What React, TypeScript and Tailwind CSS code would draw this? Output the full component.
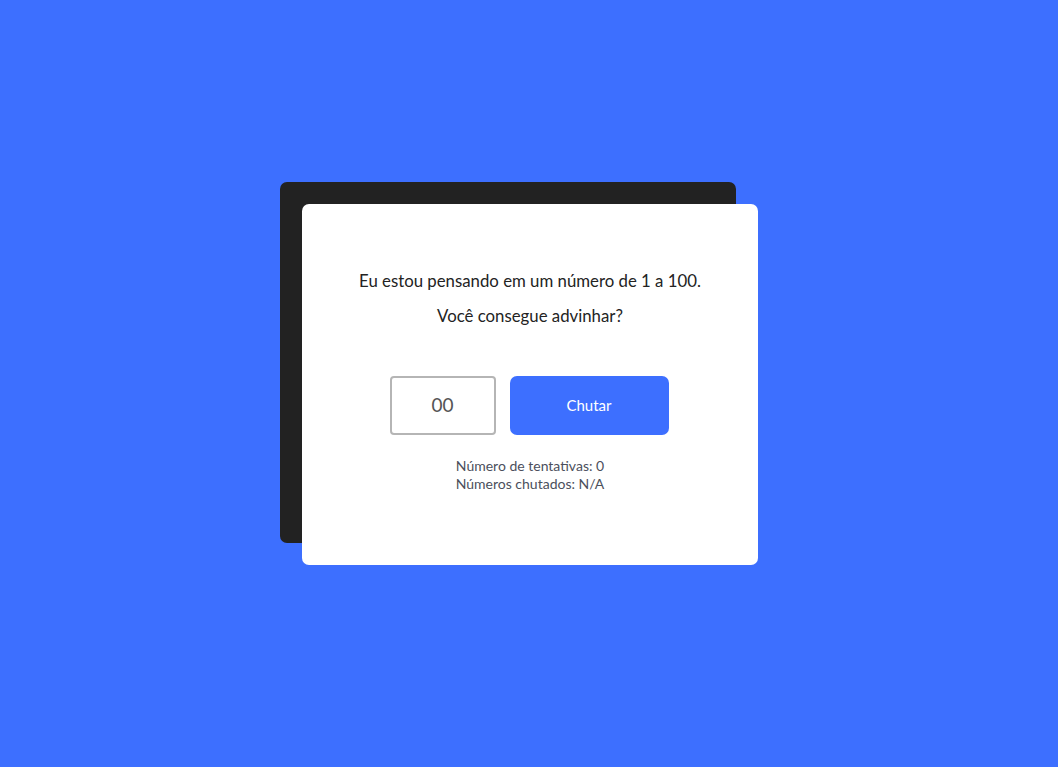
import React from "react";

export default function App() {
  return (
    <div
      className="min-h-screen w-full flex items-center justify-center bg-[#3d6fff]"
      style={{ fontFamily: "Lato, 'Open Sans', sans-serif" }}
    >
      <div className="relative w-[456px] h-[361px] ml-[2px] mt-[2px]">
        <div className="absolute left-[-22px] top-[-22px] w-[456px] h-[361px] rounded-[7px] bg-[#222222]" />
        <div className="relative w-full h-full rounded-[7px] bg-white flex flex-col items-center pt-[65px]">
          <p className="text-[16.8px] leading-[24px] text-[#232323]">
            Eu estou pensando em um número de 1 a 100.
          </p>
          <p className="mt-[11px] text-[16.8px] leading-[24px] text-[#232323]">
            Você consegue advinhar?
          </p>
          <div className="mt-[48px] flex gap-[14px] mr-[2px]">
            <div className="w-[106px] h-[59px] rounded-[4px] border-2 border-[#b5b5b5] flex items-center justify-center text-[19px] text-[#555555]">
              00
            </div>
            <button className="w-[159px] h-[59px] rounded-[7px] bg-[#3d6fff] text-white text-[15px]">
              Chutar
            </button>
          </div>
          <div className="mt-[22px] flex flex-col items-center text-[14px] leading-[18px] text-[#4b4f5c]">
            <span>Número de tentativas: 0</span>
            <span>Números chutados: N/A</span>
          </div>
        </div>
      </div>
    </div>
  );
}
